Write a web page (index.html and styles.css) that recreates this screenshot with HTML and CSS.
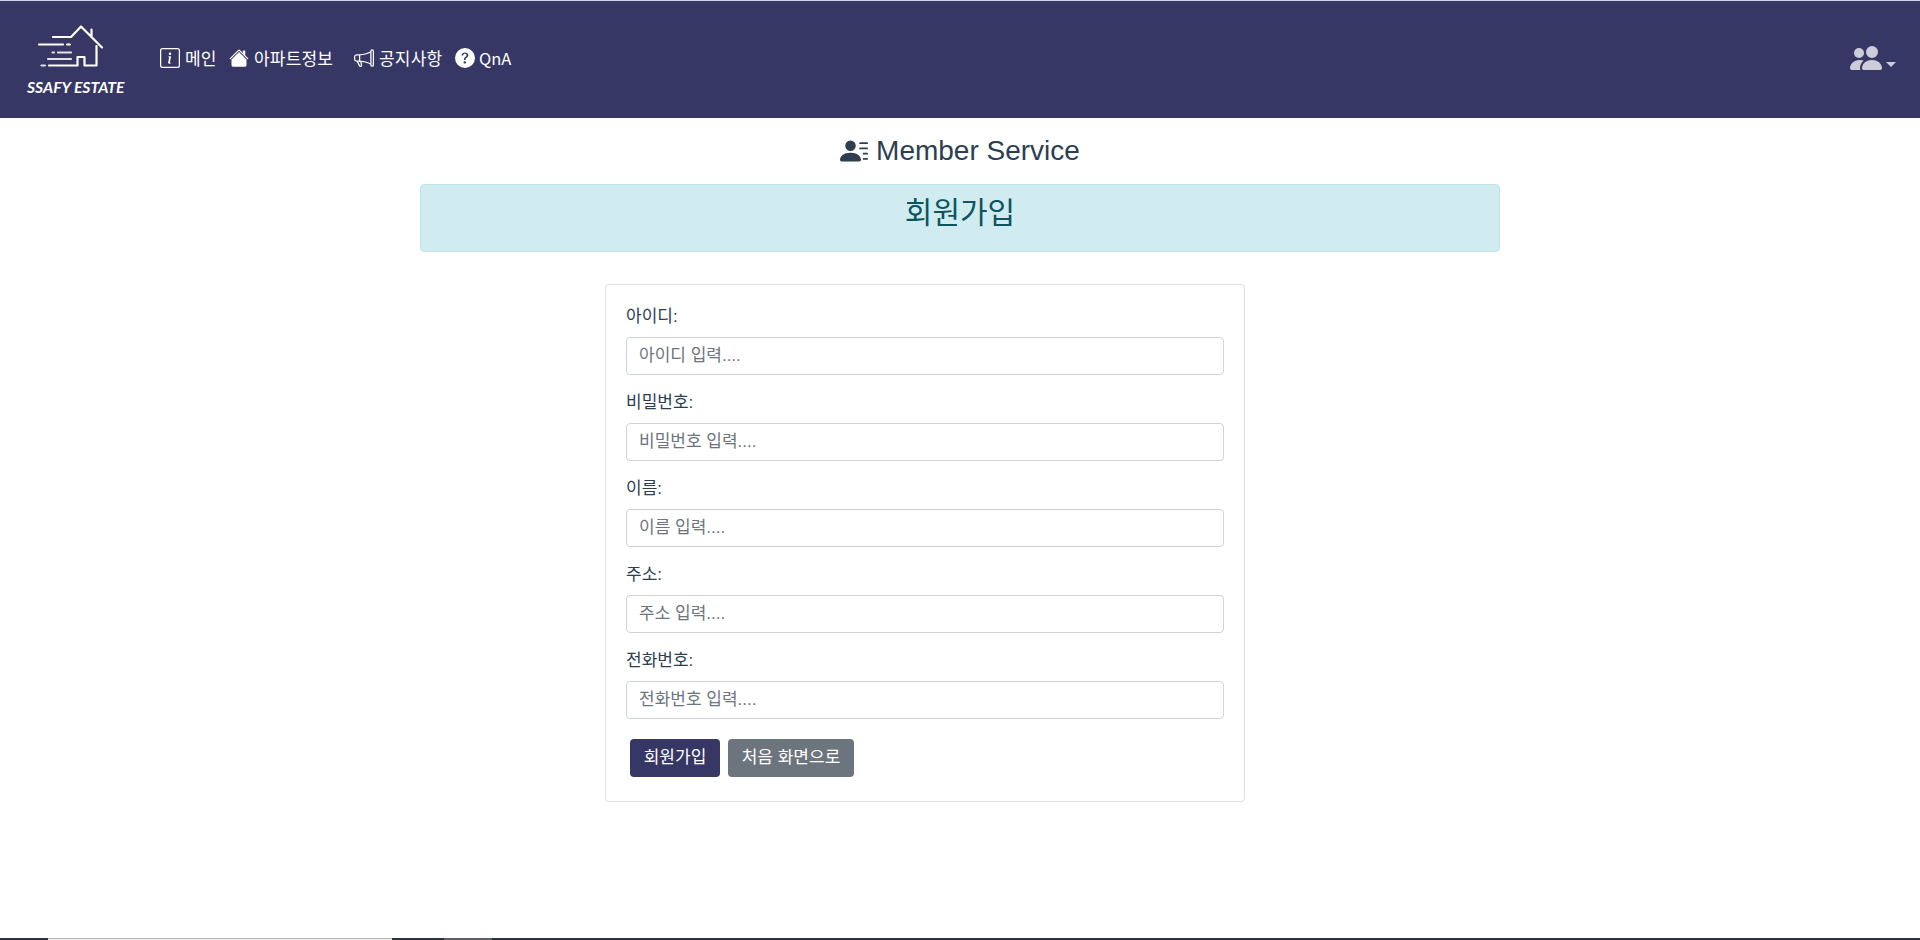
FILE: index.html
```html
<!DOCTYPE html>
<html lang="ko">
<head>
<meta charset="utf-8">
<title>SSAFY ESTATE</title>
<link rel="stylesheet" href="styles.css">
</head>
<body>
<header class="navbar">
  <a class="brand">
    <svg class="brand-mark" width="68" height="46" viewBox="0 0 68 46" fill="none" stroke="#fff" stroke-width="2.2" stroke-linecap="round" stroke-linejoin="round">
      <path d="M16 14H34L44 3.500L65 24.500M54.500 13V6.500M59.500 23V42.500H47.500V34H40.500V42.500H12M2 21.500H26M30 21.500H33"/>
      <path d="M21 29.500H34M15.500 29.500H17M11 36H34M4.500 42.500H8" stroke-opacity=".85"/>
    </svg>
    <span class="brand-name">SSAFY ESTATE</span>
  </a>
  <nav class="links">
    <a class="link link-main"><svg width="20" height="20" viewBox="0 0 16 16" fill="currentColor"><path d="M14 1a1 1 0 0 1 1 1v12a1 1 0 0 1-1 1H2a1 1 0 0 1-1-1V2a1 1 0 0 1 1-1h12zM2 0a2 2 0 0 0-2 2v12a2 2 0 0 0 2 2h12a2 2 0 0 0 2-2V2a2 2 0 0 0-2-2H2z"/><path d="m8.930 6.588-2.290.287-.082.380.450.083c.294.070.352.176.288.469l-.738 3.468c-.194.897.105 1.319.808 1.319.545 0 1.178-.252 1.465-.598l.088-.416c-.2.176-.492.246-.686.246-.275 0-.375-.193-.304-.533L8.930 6.588zM9 4.500a1 1 0 1 1-2 0 1 1 0 0 1 2 0z"/></svg><span>메인</span></a>
    <a class="link link-apt"><svg width="20" height="20" viewBox="0 0 16 16" fill="currentColor"><path d="m8 3.293 6 6V13.500a1.500 1.500 0 0 1-1.500 1.500h-9A1.500 1.500 0 0 1 2 13.500V9.293l6-6zm5-.793V6l-2-2V2.500a.5.500 0 0 1 .5-.500h1a.5.500 0 0 1 .5.500z"/><path d="M7.293 1.500a1 1 0 0 1 1.414 0l6.647 6.646a.5.500 0 0 1-.708.708L8 2.207 1.354 8.854a.5.500 0 1 1-.708-.708L7.293 1.500z"/></svg><span>아파트정보</span></a>
    <a class="link link-notice"><svg width="20" height="20" viewBox="0 0 16 16" fill="currentColor"><path d="M13 2.500a1.500 1.500 0 0 1 3 0v11a1.500 1.500 0 0 1-3 0v-.214c-2.162-1.241-4.490-1.843-6.912-2.083l.405 2.712A1 1 0 0 1 5.510 15.100h-.548a1 1 0 0 1-.916-.599l-1.850-3.490-.202-.003A2.014 2.014 0 0 1 0 9V7a2.020 2.020 0 0 1 1.992-2.013 74.663 74.663 0 0 0 2.483-.075c3.043-.154 6.148-.849 8.525-2.199V2.500zm1 0v11a.5.500 0 0 0 1 0v-11a.5.500 0 0 0-1 0zm-1 1.350c-2.344 1.205-5.209 1.842-8 2.033v4.233c.180.010.359.022.537.036 2.568.189 5.093.744 7.463 1.993V3.850zm-9 6.215v-4.130a95.090 95.090 0 0 1-1.992.052A1.020 1.020 0 0 0 1 7v2c0 .550.448 1.002 1.006 1.009A60.490 60.490 0 0 1 4 10.065zm-.657.975 1.609 3.037.010.024h.548l-.002-.014-.443-2.966a68.019 68.019 0 0 0-1.722-.082z"/></svg><span>공지사항</span></a>
    <a class="link link-qna"><svg width="20" height="20" viewBox="0 0 16 16" fill="currentColor"><path fill-rule="evenodd" d="M16 8A8 8 0 1 1 0 8a8 8 0 0 1 16 0zM5.496 6.033a.237.237 0 0 1-.240-.247C5.350 4.091 6.737 3.500 8.005 3.500c1.396 0 2.672.730 2.672 2.240 0 1.080-.635 1.594-1.244 2.057-.737.559-1.010.768-1.010 1.486v.105a.25.250 0 0 1-.250.250h-.810a.25.250 0 0 1-.250-.246l-.004-.217c-.038-.927.495-1.498 1.168-1.987.590-.444.965-.736.965-1.371 0-.825-.628-1.168-1.314-1.168-.803 0-1.253.478-1.342 1.134-.018.137-.128.250-.266.250h-.825zm2.325 6.443c-.584 0-1.009-.394-1.009-.927 0-.552.425-.940 1.010-.940.609 0 1.028.388 1.028.940 0 .533-.420.927-1.029.927z"/></svg><span class="qna">QnA</span></a>
  </nav>
  <a class="account"><svg width="32" height="32" viewBox="0 0 16 16" fill="currentColor"><path d="M7 14s-1 0-1-1 1-4 5-4 5 3 5 4-1 1-1 1H7zm4-6a3 3 0 1 0 0-6 3 3 0 0 0 0 6z"/><path d="M5.216 14A2.238 2.238 0 0 1 5 13c0-1.355.680-2.750 1.936-3.720A6.325 6.325 0 0 0 5 9c-4 0-5 3-5 4s1 1 1 1h4.216z"/><path d="M4.500 8a2.500 2.500 0 1 0 0-5 2.500 2.500 0 0 0 0 5z"/></svg><i class="caret"></i></a>
</header>
<main>
  <h3 class="title"><svg width="28" height="28" viewBox="0 0 16 16" fill="currentColor"><path d="M6 8a3 3 0 1 0 0-6 3 3 0 0 0 0 6zm-5 6s-1 0-1-1 1-4 6-4 6 3 6 4-1 1-1 1H1zM11 3.500a.5.500 0 0 1 .5-.500h4a.5.500 0 0 1 0 1h-4a.5.500 0 0 1-.5-.500zm.5 2.500a.5.500 0 0 0 0 1h4a.5.500 0 0 0 0-1h-4zm2 3a.5.500 0 0 0 0 1h2a.5.500 0 0 0 0-1h-2zm0 3a.5.500 0 0 0 0 1h2a.5.500 0 0 0 0-1h-2z"/></svg><span>Member Service</span></h3>
  <div class="alert"><h3>회원가입</h3></div>
  <form class="card">
    <div class="group"><label for="uid">아이디:</label><input id="uid" placeholder="아이디 입력...."></div>
    <div class="group"><label for="pwd">비밀번호:</label><input id="pwd" placeholder="비밀번호 입력...."></div>
    <div class="group"><label for="name">이름:</label><input id="name" placeholder="이름 입력...."></div>
    <div class="group"><label for="addr">주소:</label><input id="addr" placeholder="주소 입력...."></div>
    <div class="group"><label for="tel">전화번호:</label><input id="tel" placeholder="전화번호 입력...."></div>
    <div class="actions"><button type="button" class="btn primary">회원가입</button><button type="button" class="btn secondary">처음 화면으로</button></div>
  </form>
</main>
<footer class="strip"><i class="dark"></i><i class="light"></i><i class="dark gap"></i><i class="gray"></i><i class="dark rest"></i></footer>
</body>
</html>
```
FILE: styles.css
```css
* { box-sizing: border-box; }
body {
  margin: 0;
  height: 940px;
  display: flex;
  flex-direction: column;
  overflow: hidden;
  background: #fff;
  color: #2c3e50;
  font: 16px/24px "Liberation Sans", "Noto Sans CJK KR", sans-serif;
}
svg { display: block; flex: none; }
.navbar {
  height: 118px;
  flex: none;
  display: flex;
  align-items: center;
  border-top: 1px solid #cdd5ec;
  background: #363765;
  color: #fff;
}
.brand { width: 160px; height: 117px; padding: 22px 0 0 27px; }
.brand-mark { margin-left: 10px; }
.brand-name {
  display: block;
  margin-top: 6px;
  font: italic 700 15.7px/24px Lato, sans-serif;
  white-space: nowrap;
}
.links { display: flex; padding-bottom: 3px; font-family: "Noto Sans CJK KR", sans-serif; }
.link { display: flex; align-items: center; white-space: nowrap; }
.link span { margin-left: 5px; font-size: 17px; }
.link-main { width: 69px; }
.link-apt { width: 125px; }
.link-apt span, .link-notice span { letter-spacing: 0.2px; }
.link-notice { width: 101px; }
.link .qna { margin-left: 4px; font-size: 16.5px; }
.account {
  display: flex;
  align-items: center;
  margin: 0 24px 0 auto;
  padding-bottom: 3px;
  color: #cdcdd9;
}
.caret {
  margin: 12px 0 0 4px;
  border: 5px solid transparent;
  border-top-color: currentColor;
  border-bottom: 0;
}
.title {
  display: flex;
  align-items: center;
  justify-content: center;
  gap: 8px;
  height: 34px;
  margin: 16px 0;
  font-size: 28px;
  font-weight: 400;
}
.alert {
  width: 1080px;
  height: 68px;
  margin: 0 auto 32px;
  padding-top: 11px;
  border: 1px solid #bee5eb;
  border-radius: 4px;
  background: #d1ecf1;
  color: #0c5460;
  text-align: center;
}
.alert h3 { margin: 0; font-size: 30px; line-height: 34px; font-weight: 400; }
.card {
  width: 640px;
  height: 518px;
  margin-left: 605px;
  padding: 20px;
  border: 1px solid #dfdfdf;
  border-radius: 4px;
}
.group { height: 86px; }
.group label { display: block; height: 32px; font-size: 17px; line-height: 24px; }
.group input {
  display: block;
  width: 598px;
  height: 38px;
  padding: 6px 12px;
  border: 1px solid #ced4da;
  border-radius: 4px;
  font: 17px/24px "Liberation Sans", "Noto Sans CJK KR", sans-serif;
}
.group input::placeholder { color: #6c757d; opacity: 1; }
.actions { display: flex; gap: 8px; padding: 4px; }
.btn {
  height: 38px;
  padding: 0;
  border: 0;
  border-radius: 4px;
  color: #fff;
  font: 17px/24px "Liberation Sans", "Noto Sans CJK KR", sans-serif;
}
.primary { width: 90px; background: #363765; }
.secondary { width: 126px; background: #6c757d; }
.strip { display: flex; height: 2px; margin-top: auto; }
.dark { width: 48px; background: #29353f; }
.light { width: 344px; border-top: 1px solid #b8b8b8; background: #eee; }
.gap { width: 52px; }
.gray { width: 48px; background: #596067; }
.rest { flex: 1; }
```
